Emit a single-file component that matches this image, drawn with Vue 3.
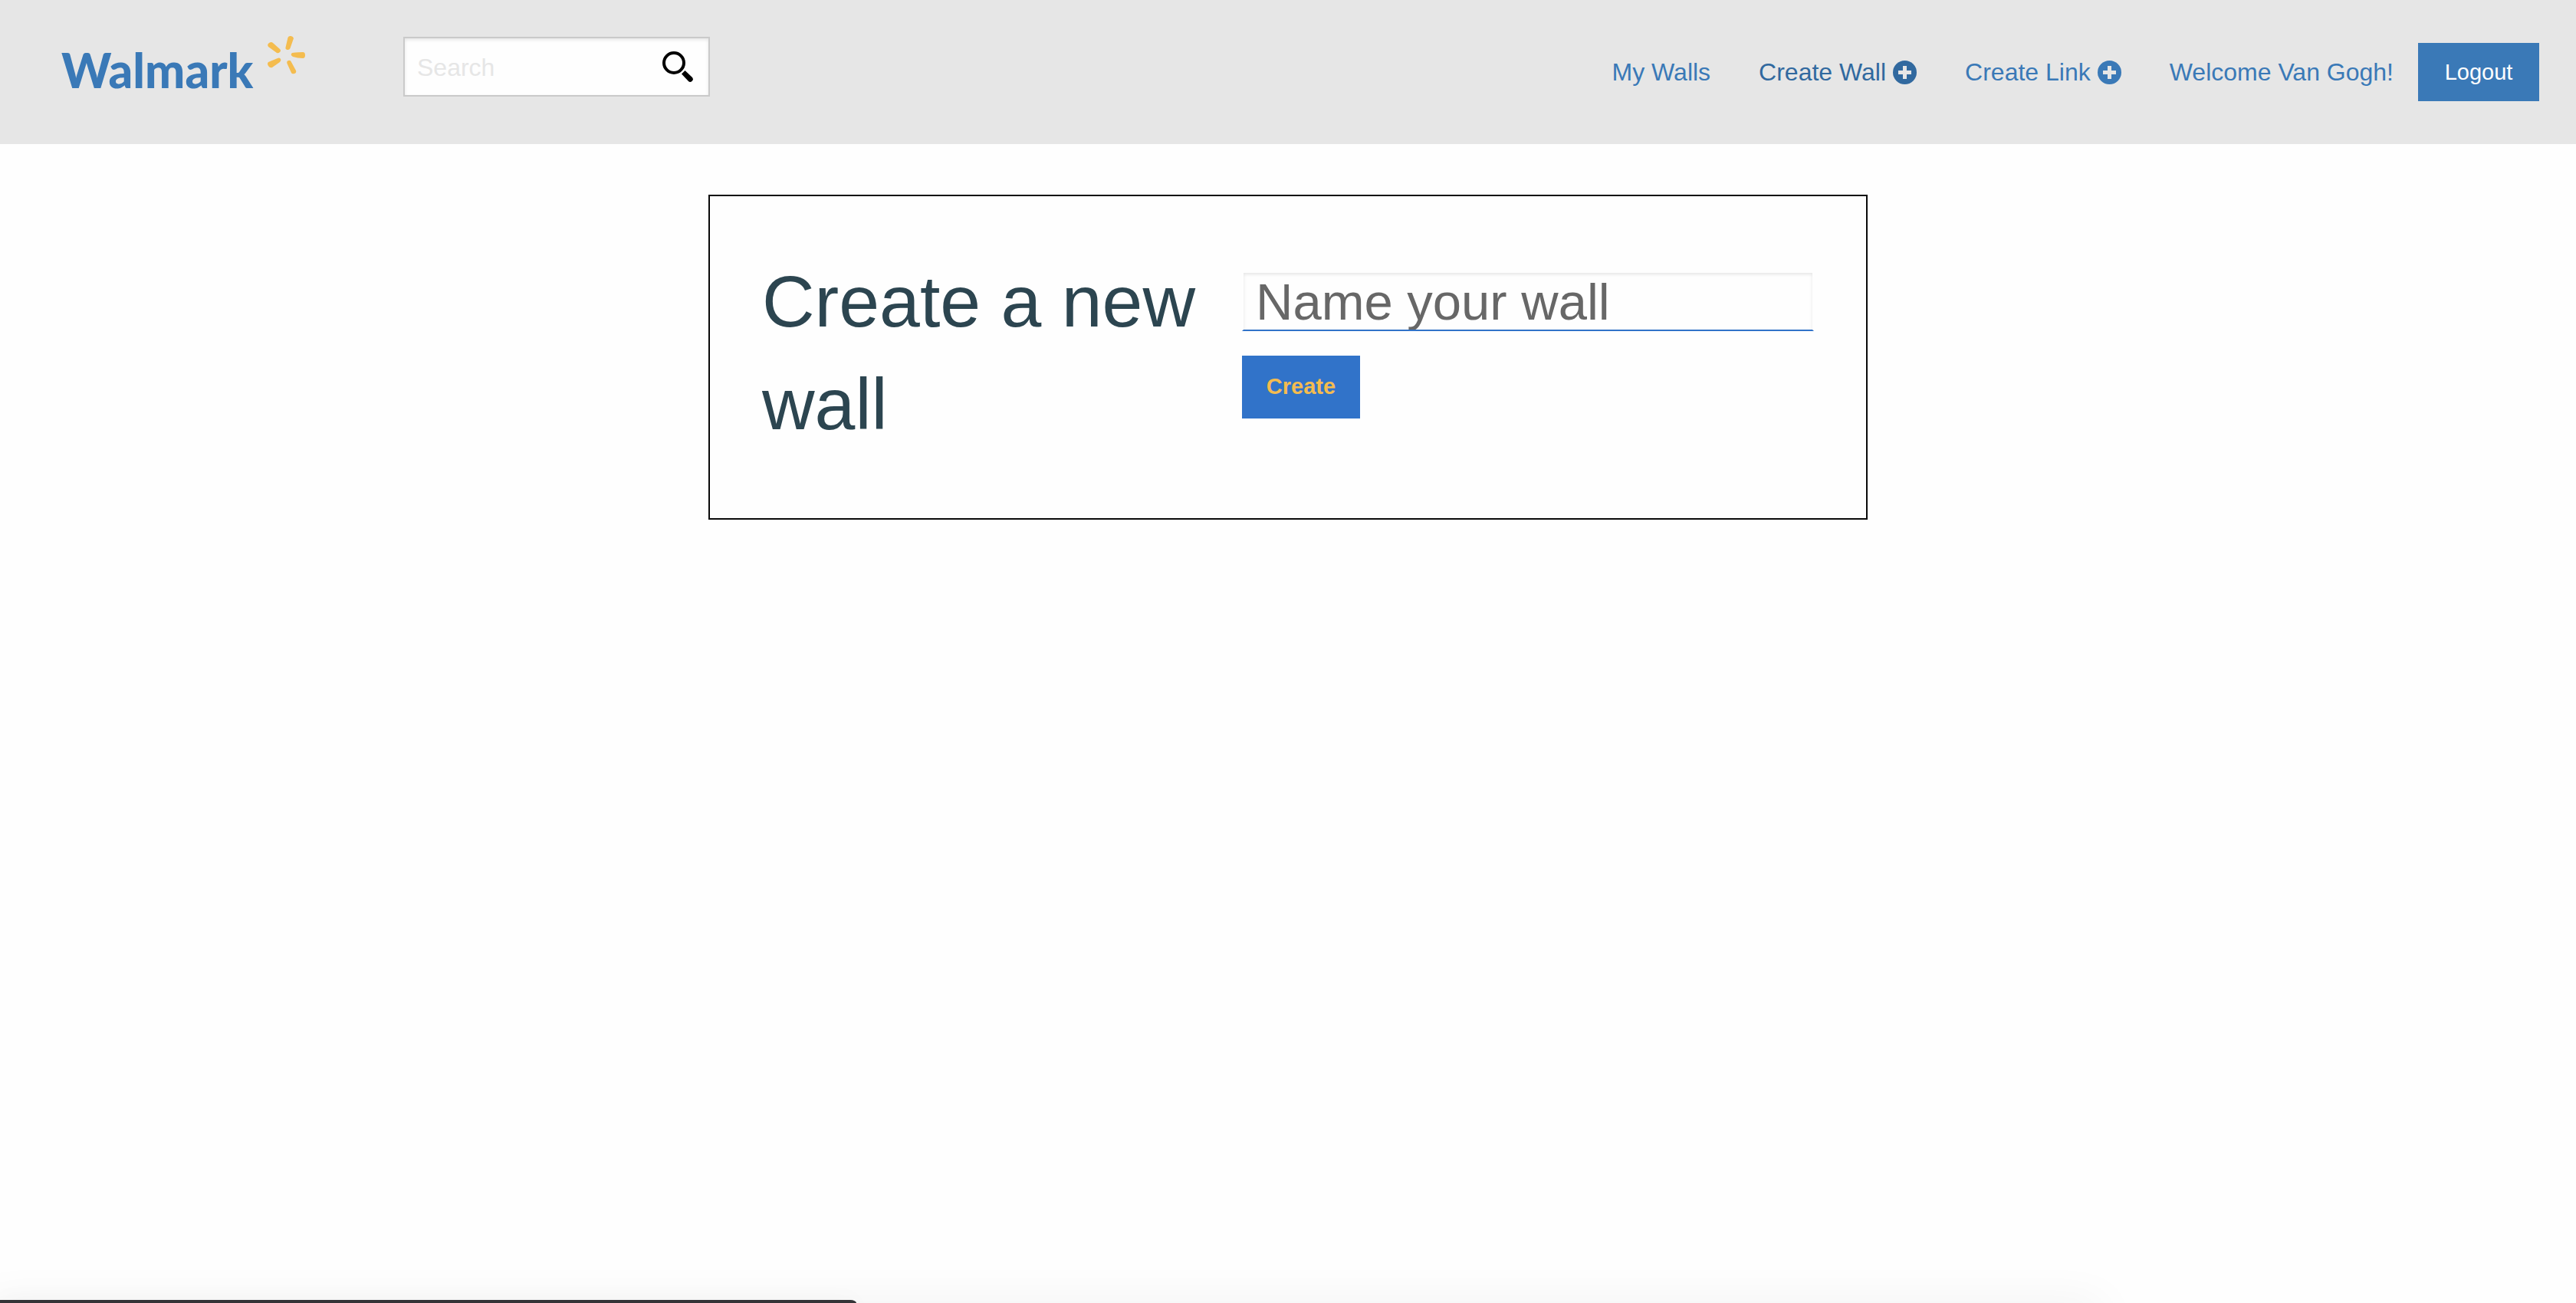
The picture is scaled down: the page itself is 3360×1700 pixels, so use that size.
<script setup>
import { ref } from 'vue'

const search = ref('')
const wallName = ref('')
const links = [
  { label: 'My Walls' },
  { label: 'Create Wall', plus: true, active: true },
  { label: 'Create Link', plus: true },
  { label: 'Welcome Van Gogh!' }
]
</script>

<template>
  <div class="page">
    <header class="topbar">
      <a class="brand" href="#">
        <span class="brand-name">Walmark</span>
        <svg class="spark" viewBox="0 0 50 52" aria-hidden="true">
          <path d="M26.500 3q1-2.500 4-2t3.500 3l-4.500 13q-1.500 3-5 1.500q-1.500-1-1-2.500z" />
          <path d="M32 23q9-1 14-1q3 0 3 4t-3 4q-7 0-13-2q-4-2.500-1-5z" />
          <path d="M26 38q-2-4 1-5t4 2l6 11q1 3-2 4t-4-1z" />
          <path d="M13 30q3-1.500 4 1q1 2-1 4l-10 7q-3 1-5-2t0-5z" />
          <path d="M1 15q-2-3 1-5t5 0l9 8q2 2 0 4t-4 1z" />
        </svg>
      </a>
      <form class="search" role="search" @submit.prevent>
        <input v-model="search" type="text" placeholder="Search" aria-label="Search" />
        <button type="submit" aria-label="Submit search">
          <svg viewBox="0 0 40 40" aria-hidden="true">
            <circle cx="15" cy="15" r="13" fill="none" stroke="#000" stroke-width="4" />
            <path d="M25 29.500L29.500 25L39 34Q41 37 38.500 39T34 39Z" fill="#000" />
          </svg>
        </button>
      </form>
      <nav class="nav">
        <a v-for="link in links" :key="link.label" href="#" :class="{ active: link.active }">
          {{ link.label }}
          <svg v-if="link.plus" class="plus" viewBox="0 0 31 31" aria-hidden="true">
            <circle cx="15.500" cy="15.500" r="15.500" fill="currentColor" />
            <path d="M13 7h5v6h6v5h-6v6h-5v-6h-6v-5h6z" fill="#e6e6e6" />
          </svg>
        </a>
        <button class="logout" type="button">Logout</button>
      </nav>
    </header>

    <main>
      <section class="card">
        <h1>Create a new wall</h1>
        <form @submit.prevent>
          <input v-model="wallName" type="text" placeholder="Name your wall" aria-label="Name your wall" />
          <button type="submit">Create</button>
        </form>
      </section>
    </main>
    <div class="shade" aria-hidden="true"></div>
    <div class="dock" aria-hidden="true"></div>
  </div>
</template>

<style>
body {
  background: #fefefe;
}
</style>

<style scoped>
* {
  box-sizing: border-box;
}
.page {
  min-height: 100vh;
  font-family: "Liberation Sans", Arial, sans-serif;
}
input,
button {
  font-family: inherit;
  border-radius: 0;
  outline: none;
}
.topbar {
  display: flex;
  align-items: flex-start;
  height: 188px;
  padding-left: 80px;
  padding-right: 48px;
  background: #e6e6e6;
}
.brand {
  display: flex;
  align-items: flex-start;
  width: 446px;
  color: #3a79b7;
  text-decoration: none;
}
.brand-name {
  width: 269px;
  margin-top: 43px;
  font: 900 62px/96px Lato, sans-serif;
}
.spark {
  width: 50px;
  height: 52px;
  margin-top: 46px;
  fill: #f4bc4f;
}
.search {
  display: flex;
  align-items: center;
  width: 400px;
  height: 78px;
  margin-top: 48px;
  border: 2px solid #cacaca;
  background: #fefefe;
  box-shadow: inset 0 2px 4px rgba(10, 10, 10, 0.1);
}
.search input {
  flex: 1;
  min-width: 0;
  padding: 2px 0 0 16px;
  border: 0;
  background: transparent;
  font-size: 32px;
  line-height: 40px;
}
.search input::placeholder {
  color: #e6e6e6;
  opacity: 1;
}
.search button {
  display: flex;
  padding: 0;
  margin-right: 20px;
  border: 0;
  background: transparent;
}
.search svg {
  width: 40px;
  height: 40px;
}
.nav {
  display: flex;
  align-items: center;
  height: 76px;
  margin-top: 56px;
  margin-left: auto;
}
.nav a {
  display: flex;
  align-items: center;
  gap: 9px;
  margin-right: 63px;
  color: #3a79b7;
  font-size: 32px;
  line-height: 40px;
  white-space: nowrap;
  text-decoration: none;
}
.nav a.active {
  color: #31699f;
}
.nav a:last-of-type {
  margin-right: 32px;
}
.plus {
  width: 31px;
  height: 31px;
}
.logout {
  width: 158px;
  height: 76px;
  padding: 0;
  border: 0;
  background: #3a79b7;
  color: #fefefe;
  font-size: 29px;
}
.card {
  display: flex;
  justify-content: space-between;
  width: 45%;
  margin: 66px auto 0;
  padding: 70px 68px 82px;
  border: 2px solid #0a0a0a;
}
h1 {
  width: 600px;
  margin: 0;
  color: #2c4550;
  font-size: 95px;
  font-weight: normal;
  line-height: 134px;
}
.card form {
  width: 746px;
  margin-top: 28px;
}
.card input {
  display: block;
  width: 100%;
  height: 78px;
  padding: 0 16px;
  border: 2px solid transparent;
  border-bottom-color: #3173c9;
  background: #fefefe;
  background-clip: padding-box;
  box-shadow: inset 0 2px 4px rgba(10, 10, 10, 0.1);
  font-size: 67px;
}
.card input::placeholder {
  color: #676767;
  opacity: 1;
}
.card button {
  width: 154px;
  height: 82px;
  margin-top: 32px;
  padding: 0 0 2px;
  border: 0;
  background: #3173c9;
  color: #f4bc4f;
  font-size: 29px;
  font-weight: bold;
}
.shade,
.dock {
  position: fixed;
  bottom: 0;
  left: 0;
}
.shade {
  width: 81%;
  height: 0;
  box-shadow: 0 20px 60px 20px rgba(0, 0, 0, 0.06);
}
.dock {
  width: 1117px;
  height: 4px;
  border-top-right-radius: 8px 4px;
  background: #343437;
  box-shadow: 0 8px 30px rgba(0, 0, 0, 0.15);
}
</style>
